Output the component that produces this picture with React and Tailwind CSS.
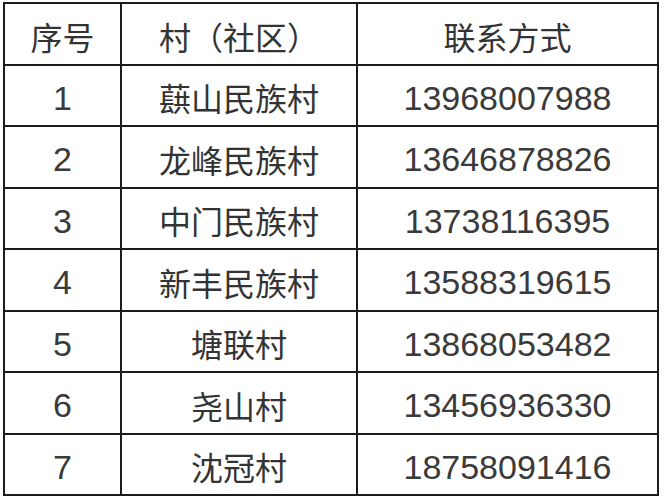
import React from "react";

const rows = [
  ["1", "蕻山民族村", "13968007988"],
  ["2", "龙峰民族村", "13646878826"],
  ["3", "中门民族村", "13738116395"],
  ["4", "新丰民族村", "13588319615"],
  ["5", "塘联村", "13868053482"],
  ["6", "尧山村", "13456936330"],
  ["7", "沈冠村", "18758091416"],
];

const cjkCell =
  "bg-white flex items-center justify-center pt-[4px] text-[32px] text-[#333333] font-['Noto_Sans_CJK_SC',sans-serif]";
const numCell =
  "bg-white flex items-center justify-center pt-[6px] text-[34px] text-[#3a3a3a] font-['Liberation_Sans',Arial,sans-serif]";

export default function App() {
  return (
    <div className="w-[664px] h-[500px] bg-white overflow-hidden">
      <div className="ml-[3px] mt-[2px] inline-grid grid-cols-[115px_234px_299px] auto-rows-[59.5px] gap-[2px] p-[2px] bg-[#1c1c1c]">
        <div className={cjkCell}>序号</div>
        <div className={cjkCell}>村（社区）</div>
        <div className={cjkCell}>联系方式</div>
        {rows.map(([n, v, p]) => (
          <React.Fragment key={n}>
            <div className={numCell}>{n}</div>
            <div className={cjkCell}>{v}</div>
            <div className={numCell}>{p}</div>
          </React.Fragment>
        ))}
      </div>
    </div>
  );
}
